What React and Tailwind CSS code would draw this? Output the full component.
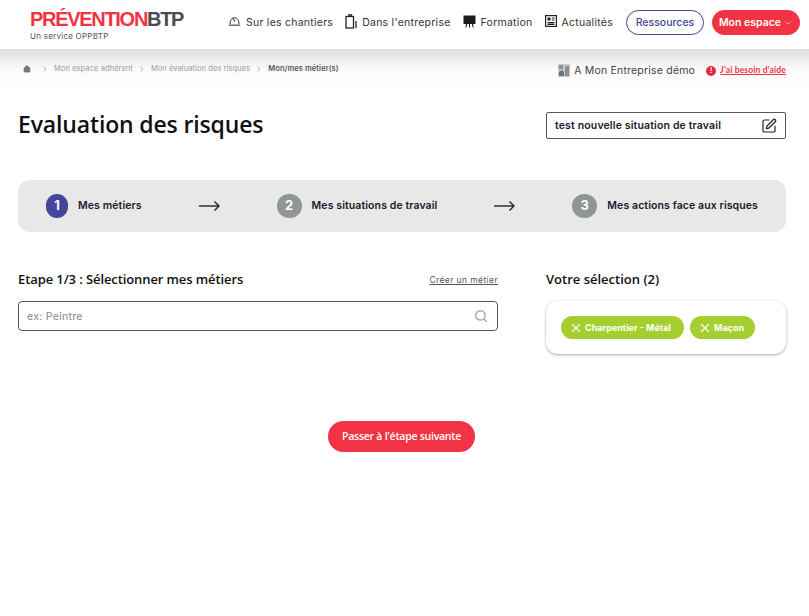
import React from "react";
import { ChevronRight, ChevronDown, Search, X, SquarePen, Home } from "lucide-react";

const WORK = "font-['Inter','Liberation_Sans',sans-serif]";

const NavIcon = ({ type }) => {
  if (type === "helmet")
    return (
      <svg width="13" height="11" viewBox="0 0 16 12" fill="none" stroke="#333" strokeWidth="1.3" className="mb-[3px]">
        <path d="M2.5 9.5C2.5 5 4.8 1.5 8 1.5s5.5 3.5 5.5 8" />
        <path d="M1 10.5h14" />
        <path d="M6 2l2.5 4" />
      </svg>
    );
  if (type === "clipboard")
    return (
      <svg width="12" height="15" viewBox="0 0 12 15" fill="none" stroke="#222" strokeWidth="1.3" className="mb-[3px]">
        <rect x="1" y="2.5" width="7.5" height="11.5" />
        <path d="M3 1h3.5v1.5" />
        <path d="M11 7v7" />
      </svg>
    );
  if (type === "board")
    return (
      <svg width="13" height="13" viewBox="0 0 13 13" fill="#1c1c1c" className="mb-[3px]">
        <rect x="0.5" y="0.5" width="12" height="8.5" />
        <path d="M3 9h1.2L3.4 12.5H2.4zM6 9h1v3.5H6zM8.8 9H10l.7 3.5H9.7z" />
      </svg>
    );
  return (
    <svg width="12" height="12" viewBox="0 0 12 12" fill="none" stroke="#222" strokeWidth="1.2" className="mb-[3px]">
      <rect x="0.6" y="0.6" width="10.8" height="10.8" />
      <rect x="2.5" y="2.5" width="3" height="3" fill="#222" stroke="none" />
      <path d="M7 3h2.5M7 5h2.5M2.5 7.7h7M2.5 9.4h7" />
    </svg>
  );
};

const NavItem = ({ icon, label }) => (
  <div className="flex items-center gap-[5px]">
    <NavIcon type={icon} />
    <span className="text-[10.5px] tracking-[0.25px] text-[#333]">{label}</span>
  </div>
);

const Header = () => (
  <header className="relative z-10 flex h-[49px] items-center bg-white pb-[4px] pl-[30px]">
    <div className="flex w-[168px] flex-col pt-[4px]">
      <div className="flex h-[20px] items-center text-[20px] leading-none font-bold tracking-[-1.3px] font-['Liberation_Sans',sans-serif]">
        <span className="text-[#f23343]">PRÉVENTION</span>
        <span className="text-[#4a4d52]">BTP</span>
      </div>
      <span className="mt-[2.5px] text-[8px] leading-[8px] tracking-[0.25px] text-[#555]">Un service OPPBTP</span>
    </div>
    <div className="ml-[30px] flex items-center gap-[12px]">
      <NavItem icon="helmet" label="Sur les chantiers" />
      <NavItem icon="clipboard" label="Dans l'entreprise" />
      <NavItem icon="board" label="Formation" />
      <NavItem icon="news" label="Actualités" />
    </div>
    <div className="ml-[13px] flex h-[25px] w-[78px] items-center justify-center rounded-full border border-[#45459b] text-[10.5px] font-medium text-[#45459b]">
      Ressources
    </div>
    <div className="ml-[8px] flex h-[25px] w-[88px] items-center justify-center gap-[2px] rounded-full bg-[#f23343] text-[10.5px] font-semibold text-white">
      Mon espace
      <ChevronDown size={10} strokeWidth={1.5} />
    </div>
  </header>
);

const Breadcrumb = () => (
  <div className="flex h-[40px] items-center justify-between bg-gradient-to-b from-[#dddddd] via-[#fafafa] to-white pt-[3px] pl-[23px] pr-[23px]">
    <div className="flex items-center text-[7.5px] tracking-[0.08px] -mt-[4px]">
      <Home size={8} className="text-[#777]" fill="#777" />
      <ChevronRight size={8} className="ml-[10px] mr-[5px] text-[#888]" />
      <span className="text-[#9a9a9a]">Mon espace adhérent</span>
      <ChevronRight size={8} className="mx-[5px] text-[#888]" />
      <span className="text-[#9a9a9a]">Mon évaluation des risques</span>
      <ChevronRight size={8} className="mx-[5px] text-[#888]" />
      <span className="font-semibold text-[#555]">Mon/mes métier(s)</span>
    </div>
    <div className="flex items-center">
      <svg width="12" height="13" viewBox="0 0 12 13" fill="#8a8f94">
        <rect x="0" y="0" width="12" height="13" fill="#c8cbce" />
        <rect x="1" y="1" width="4" height="4" />
        <rect x="7" y="2" width="4" height="10" />
        <path d="M1 12V8l3-2 2 2v4z" fill="#6d7276" />
      </svg>
      <span className="ml-[4px] text-[10.5px] tracking-[0.2px] text-[#444]">A Mon Entreprise démo</span>
      <span className="ml-[11px] flex h-[10px] w-[10px] items-center justify-center rounded-full bg-[#e8273a] text-[7px] leading-none font-bold text-white">!</span>
      <a className="ml-[4px] text-[8.5px] font-bold tracking-[0.15px] text-[#f23343] underline font-['Lato',sans-serif]">J'ai besoin d'aide</a>
    </div>
  </div>
);

const Step = ({ n, label, active }) => (
  <div className="flex items-center gap-[10px]">
    <div className={`flex items-center justify-center rounded-full text-[13px] font-bold text-white ${active ? "h-[24px] w-[22px] bg-[#45459b]" : "h-[24px] w-[25px] bg-[#909598]"}`}>
      {n}
    </div>
    <span className="text-[10.5px] font-semibold tracking-[0.1px] text-[#1a1a2a]">{label}</span>
  </div>
);

const Arrow = () => (
  <svg width="21" height="12" viewBox="0 0 21 12" fill="none" stroke="#222" strokeWidth="1.4">
    <path d="M0 6h20" />
    <path d="M15.5 1.5L20 6l-4.5 4.5" />
  </svg>
);

const Chip = ({ label, className }) => (
  <div className={`flex h-[23px] items-center gap-[2px] rounded-full bg-[#a5cf2f] pl-[8px] text-[9px] font-bold text-white ${className}`}>
    <X size={14} strokeWidth={2} />
    {label}
  </div>
);

export default function App() {
  return (
    <div className={`min-h-[616px] bg-white ${WORK}`}>
      <Header />
      <Breadcrumb />

      <main className="pr-[23px] pl-[18px]">
        <div className="mt-[23px] flex h-[27px] items-center justify-between">
          <h1 className="pb-[2px] text-[23px] leading-[27px] font-semibold tracking-[-0.15px] text-[#111] font-['Open_Sans',sans-serif]">Evaluation des risques</h1>
          <div className="flex h-[27px] w-[240px] items-center justify-between rounded-[2px] border border-[#555] pl-[8px] pr-[8px]">
            <span className="text-[10.5px] font-semibold tracking-[0.15px] text-[#1a1a2a]">test nouvelle situation de travail</span>
            <SquarePen size={16} strokeWidth={1.8} className="text-[#222]" />
          </div>
        </div>

        <div className="mt-[41px] flex h-[52px] items-center justify-between rounded-xl bg-[#e8e8e8] px-[28px]">
          <Step n="1" label="Mes métiers" active />
          <Arrow />
          <Step n="2" label="Mes situations de travail" />
          <Arrow />
          <Step n="3" label="Mes actions face aux risques" />
        </div>

        <div className="mt-[38px] flex justify-between">
          <div className="w-[480px]">
            <div className="flex h-[20px] items-center justify-between">
              <h2 className="text-[13px] font-semibold tracking-[-0.1px] text-[#111] font-['Open_Sans',sans-serif]">Etape 1/3 : Sélectionner mes métiers</h2>
              <a className="text-[8.5px] tracking-[0.4px] text-[#555] underline">Créer un métier</a>
            </div>
            <div className="mt-[11px] flex h-[30px] items-center justify-between rounded-[4px] border border-[#555] pl-[8px] pr-[9px]">
              <span className="pt-[1px] text-[10.5px] tracking-[0.3px] text-[#7d8a93]">ex: Peintre</span>
              <Search size={14} strokeWidth={2.5} className="text-[#aaa]" />
            </div>
          </div>
          <div className="w-[240px]">
            <h2 className="flex h-[20px] items-center text-[13px] font-semibold text-[#111] font-['Open_Sans',sans-serif]">Votre sélection (2)</h2>
            <div className="mt-[11px] flex h-[53px] items-start gap-[6px] rounded-xl bg-white pt-[15px] pl-[15px] shadow-[0_1px_3px_rgba(0,0,0,0.35)]">
              <Chip label="Charpentier - Métal" className="w-[123px]" />
              <Chip label="Maçon" className="w-[65px]" />
            </div>
          </div>
        </div>

        <div className="mt-[67px] flex justify-center">
          <div className="mr-[1px] flex h-[31px] w-[147px] items-center justify-center rounded-full bg-[#f23343] text-[10.5px] font-semibold tracking-[-0.25px] text-white font-['Open_Sans',sans-serif]">
            Passer à l'étape suivante
          </div>
        </div>
      </main>
    </div>
  );
}
